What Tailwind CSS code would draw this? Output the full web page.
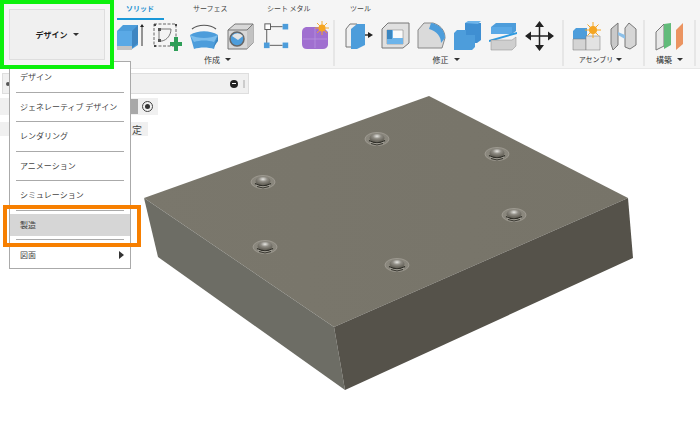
<!DOCTYPE html>
<html lang="ja">
<head>
<meta charset="UTF-8">
<title>デザイン</title>
<script src="https://cdn.jsdelivr.net/npm/@tailwindcss/browser@4"></script>
</head>
<body class="bg-white">
<div class="relative w-[700px] h-[430px] overflow-hidden bg-white text-[#333] font-['Noto_Sans_CJK_JP','Noto_Sans',sans-serif]">

  <!-- toolbar -->
  <header class="flex h-[69px] bg-[#f5f5f5] border-b border-[#e8e8e8]">
    <div class="relative z-20 w-[114px] h-[69px] shrink-0 border-[4px] border-[#0bf00b] p-[5px] bg-[#f5f5f5]">
      <div class="flex items-center justify-center gap-[5px] h-full bg-[#f0f0f0] border border-[#dedede] text-[8px] font-bold text-[#222]">デザイン<span class="w-0 h-0 border-x-[3px] border-x-transparent border-t-[3px] border-t-[#333]"></span></div>
    </div>
    <div class="flex flex-col grow">
      <nav class="relative h-[20px] text-[7px] text-[#444]">
        <span class="absolute left-[12px] top-[3px] font-bold text-[#1b8fd0]">ソリッド</span>
        <span class="absolute left-[3px] top-[18px] w-[47px] h-[2px] bg-[#1b98d8]"></span>
        <span class="absolute left-[79px] top-[3px]">サーフェス</span>
        <span class="absolute left-[153px] top-[3px]">シート メタル</span>
        <span class="absolute left-[236px] top-[3px]">ツール</span>
      </nav>
      <div class="flex grow">
        <!-- 作成 -->
        <section class="w-[221px] mb-[2px] border-r-2 border-[#e6e6e6] flex flex-col">
          <div class="flex gap-[7px] pl-[1px] h-[31px] items-center">
            <svg class="w-[30px] h-[30px]" viewBox="0 0 30 30"><path d="M2 10l6-6h15v20l-6 4H2z" fill="#4d9ddb"/><path d="M2 10h15v15H2z" fill="#5aa9e6"/><path d="M17 10l6-6v18l-6 5z" fill="#3f86c2"/><path d="M2 25h15v4H2z" fill="#c4c4c4"/><path d="M27 5v20" stroke="#333" stroke-width="1"/><path d="M25 6l2-3 2 3z" fill="#222"/></svg>
            <svg class="w-[30px] h-[30px]" viewBox="0 0 30 30"><rect x="2" y="3" width="22" height="22" fill="none" stroke="#666" stroke-width="1" stroke-dasharray="3 1.500"/><path d="M2 3h2v2H2zM23 3h2v2h-2zM2 24h2v2H2z" fill="#444"/><path d="M7 8h12c0 6-4 11-9 12H7z" fill="#f4f4f4" stroke="#777" stroke-width="1"/><rect x="6" y="7" width="3" height="3" fill="#555"/><rect x="6" y="18" width="3" height="3" fill="#555"/><path d="M18 21h4v-5h4v5h4v4h-4v5h-4v-5h-4z" fill="#2e9e57"/></svg>
            <svg class="w-[30px] h-[30px]" viewBox="0 0 30 30"><path d="M1 14c8-5 20-5 28 0l-4 14c-6-2-14-2-20 0z" fill="#4d9ddb"/><path d="M1 14c8 4 20 4 28 0l-4 7c-6-2-14-2-20 0z" fill="#7cbdec"/><path d="M24 27l5-13v6z" fill="#3b86c0"/><path d="M3 8c6-5 18-5 24 0" fill="none" stroke="#555" stroke-width="1.200"/></svg>
            <svg class="w-[30px] h-[30px]" viewBox="0 0 30 30"><path d="M2 9l7-6h18v19l-6 6H2z" fill="#d8d8d8" stroke="#777" stroke-width="1"/><path d="M21 9v19l6-6V3z" fill="#c2c2c2"/><path d="M2 9h19M21 9l6-6" stroke="#777" stroke-width="1"/><circle cx="11" cy="18" r="7" fill="#4d9ddb" stroke="#666" stroke-width="1.500"/><path d="M6 15a7 7 0 0 1 11 0l-5 4z" fill="#e4e4e4"/></svg>
            <svg class="w-[28px] h-[30px]" viewBox="0 0 30 30"><path d="M7 5h14M4 8v15M7 25h14" stroke="#555" stroke-width="1" fill="none"/><rect x="2" y="2" width="6" height="6" fill="#fff" stroke="#555"/><rect x="21" y="2" width="6" height="6" fill="#4d9ddb"/><rect x="1" y="22" width="6" height="6" fill="#4d9ddb"/><rect x="21" y="22" width="6" height="6" fill="#4d9ddb"/></svg>
            <svg class="w-[30px] h-[30px] ml-[2px]" viewBox="0 0 30 30"><path d="M2 11q0-4 4-5h17l5 5v13q-1 4-5 4H7q-5 0-5-5z" fill="#a06fd0"/><path d="M3 18h24M15 7v20" stroke="#b892e0" stroke-width=".8"/><circle cx="22" cy="7" r="3.500" fill="#f5a623"/><path d="M22 0v14M15 7h14M17 2l10 10M27 2L17 12" stroke="#f5a623" stroke-width=".9"/></svg>
          </div>
          <div class="flex items-center justify-center gap-[5px] text-[8px] h-[15px] pt-[2px] pr-[12px]">作成<span class="w-0 h-0 border-x-[3px] border-x-transparent border-t-[3px] border-t-[#333]"></span></div>
        </section>
        <!-- 修正 -->
        <section class="w-[229px] mb-[2px] border-r-2 border-[#e6e6e6] flex flex-col">
          <div class="flex gap-[7px] pl-[10px] h-[31px] items-center">
            <svg class="w-[29px] h-[30px]" viewBox="0 0 29 30"><path d="M1 8l4-5h7v23H1z" fill="#f0f0f0" stroke="#777"/><path d="M6 8l6-5h8v21l-8 4H6z" fill="#4d9ddb"/><path d="M20 14h4" stroke="#333" stroke-width="1.500"/><path d="M23 11l5 3-5 3z" fill="#222"/></svg>
            <svg class="w-[29px] h-[30px]" viewBox="0 0 29 30"><path d="M1 8l6-6h21v20l-6 5H1z" fill="#e0e0e0" stroke="#777"/><path d="M6 9h16v14H6z" fill="#fafafa" stroke="#777" stroke-width=".5"/><path d="M6 9h6v8h10v6H6z" fill="#6db4ea"/><path d="M6 9h5v9H6z" fill="#3b86c0"/></svg>
            <svg class="w-[29px] h-[30px]" viewBox="0 0 29 30"><path d="M1 9l6-7h9c7 2 12 7 12 15l-3 10H1z" fill="#dadada" stroke="#888"/><path d="M14 2c8 1 14 7 14 15l-4 5c0-6-4-12-12-14z" fill="#4d9ddb"/></svg>
            <svg class="w-[29px] h-[30px]" viewBox="0 0 29 30"><path d="M12 2h16v17l-4 3H12z" fill="#3f8fd2"/><path d="M1 12l3-3h9v5h9v12l-3 3H1z" fill="#4d9ddb"/><path d="M12 2l3-2h13l-3 3z" fill="#6db4ea"/></svg>
            <svg class="w-[29px] h-[30px]" viewBox="0 0 29 30"><path d="M2 6l5-4h20v8l-4 3H2z" fill="#4d9ddb"/><path d="M2 6h21v7H2z" fill="#5aa9e6"/><path d="M0 19l28-8v2L0 21z" fill="#2f9be0"/><path d="M2 19h21l4-3v9l-4 4H2z" fill="#cfcfcf" stroke="#888" stroke-width=".5"/></svg>
            <svg class="w-[29px] h-[30px]" viewBox="0 0 29 30"><path d="M14.500 3v24M2 15h25" stroke="#222" stroke-width="1.500"/><path d="M14.500 0l4.500 6h-9zM14.500 30l4.500-6h-9zM0 15l6-4.500v9zM29 15l-6-4.500v9z" fill="#222"/></svg>
          </div>
          <div class="flex items-center justify-center gap-[5px] text-[8px] h-[15px] pt-[2px] pr-[5px]">修正<span class="w-0 h-0 border-x-[3px] border-x-transparent border-t-[3px] border-t-[#333]"></span></div>
        </section>
        <!-- アセンブリ -->
        <section class="w-[81px] mb-[2px] border-r-2 border-[#e6e6e6] flex flex-col">
          <div class="flex gap-[8px] pl-[8px] h-[31px] items-center">
            <svg class="w-[29px] h-[30px]" viewBox="0 0 29 30"><path d="M1 10l3-3h11v11H1z" fill="#4d9ddb"/><path d="M1 18h13v11H1z" fill="#d4d4d4" stroke="#777" stroke-width=".5"/><path d="M14 15h14v14H14z" fill="#e2e2e2" stroke="#777" stroke-width=".5"/><circle cx="21" cy="9" r="4" fill="#f5a623"/><path d="M21 1v16M13 9h16M15.500 3.500l11 11M26.500 3.500l-11 11" stroke="#f5a623" stroke-width="1"/></svg>
            <svg class="w-[29px] h-[30px]" viewBox="0 0 29 30"><path d="M2 8l7-6v22l-5 5-2-6z" fill="#c9c9c9" stroke="#777"/><path d="M27 8l-7-6-4 5v19l5 2 6-4z" fill="#d6d6d6" stroke="#777"/><path d="M9 14l7 4v-4l-7-3z" fill="#8dc0e8"/></svg>
          </div>
          <div class="flex items-center justify-center gap-[3px] text-[7px] h-[15px] pt-[2px] pr-[6px]">アセンブリ<span class="w-0 h-0 border-x-[3px] border-x-transparent border-t-[3px] border-t-[#333]"></span></div>
        </section>
        <!-- 構築 -->
        <section class="w-[51px] mb-[2px] border-r-2 border-[#e6e6e6] flex flex-col">
          <div class="flex pl-[10px] h-[31px] items-center">
            <svg class="w-[29px] h-[30px]" viewBox="0 0 29 30"><path d="M1 11l8-8v22l-8 4z" fill="#e8e8e8" stroke="#777"/><path d="M9 3l7-1v22l-7 4z" fill="#62bb7a"/><path d="M21 9l7-7v21l-7 6z" fill="#eb9461"/></svg>
          </div>
          <div class="flex items-center justify-center gap-[5px] text-[8px] h-[15px] pt-[2px]">構築<span class="w-0 h-0 border-x-[3px] border-x-transparent border-t-[3px] border-t-[#333]"></span></div>
        </section>
      </div>
    </div>
  </header>

  <!-- browser panel behind the menu -->
  <div class="flex items-center justify-between w-[247px] h-[21px] ml-[2px] mt-[4px] bg-[#f0f0f0] border border-[#dedede] px-[3px]">
    <span class="w-[4px] h-[4px] rounded-full bg-[#555]"></span>
    <span class="flex items-center gap-[5px]">
      <span class="flex items-center justify-center w-[8px] h-[8px] rounded-full bg-[#222]"><span class="w-[4px] h-px bg-white"></span></span>
      <span class="w-[2px] h-[8px] bg-[#ccc]"></span>
    </span>
  </div>
  <div class="flex justify-end items-center w-[158px] h-[17px] mt-[4px] bg-[#f0f0f0] pr-[5px] gap-[4px]">
    <span class="w-[7px] h-[15px] bg-[#a8a8a8]"></span>
    <span class="flex items-center justify-center w-[11px] h-[11px] rounded-full border border-[#444]"><span class="w-[5px] h-[5px] rounded-full bg-[#333]"></span></span>
  </div>
  <div class="flex justify-end items-center w-[148px] h-[14px] mt-[7px] bg-[#f0f0f0] pr-[6px] text-[10px] text-[#444]">定</div>

  <!-- model on the canvas -->
  <svg class="absolute left-0 top-0 w-[700px] h-[430px]" viewBox="0 0 700 430">
    <defs>
      <radialGradient id="hole" cy=".3" r=".55"><stop offset="0" stop-color="#e6e6e2"/><stop offset=".5" stop-color="#8f8c84"/><stop offset="1" stop-color="#6a675e"/></radialGradient>
      <linearGradient id="topFace" x1="0" y1="0" x2="1" y2="0"><stop offset="0" stop-color="#7a776c"/><stop offset="1" stop-color="#777469"/></linearGradient>
      <g id="nut">
        <ellipse rx="12" ry="6.500" fill="#8a877d" stroke="#a3a097" stroke-width=".8"/>
        <ellipse cy="-1" rx="7.500" ry="4.500" fill="url(#hole)"/>
        <path d="M-8 1.500q8 4.500 16 0" stroke="#2f2e28" stroke-width="1.200" fill="none"/>
        <path d="M-7 3q7 4 14 0" stroke="#b5b2a9" stroke-width=".7" fill="none"/>
        <path d="M-6 4.500q6 3 12 0" stroke="#37362f" stroke-width="1" fill="none"/>
      </g>
    </defs>
    <path d="M429 96L628 198L334 327L144 198z" fill="url(#topFace)"/>
    <path d="M144 198L334 327L345 390L158 257z" fill="#6d6d65"/>
    <path d="M334 327L628 198L633 258L345 390z" fill="#55524a"/>
    <use href="#nut" x="377" y="139"/>
    <use href="#nut" x="497" y="154"/>
    <use href="#nut" x="263" y="182"/>
    <use href="#nut" x="514" y="215"/>
    <use href="#nut" x="265" y="247"/>
    <use href="#nut" x="397" y="265"/>
  </svg>

  <!-- workspace menu -->
  <ul class="absolute left-[9px] top-[61px] w-[122px] h-[208px] bg-white border border-[#aaa] text-[8px] text-[#444] px-[6px] z-10">
    <li class="h-[30.500px] flex items-center pl-[4px] pt-[1px] border-b border-[#aaa]">デザイン</li>
    <li class="h-[29.500px] flex items-center pl-[4px] border-b border-[#aaa]">ジェネレーティブ デザイン</li>
    <li class="h-[29.500px] flex items-center pl-[4px] border-b border-[#aaa]">レンダリング</li>
    <li class="h-[29.500px] flex items-center pl-[4px] border-b border-[#aaa]">アニメーション</li>
    <li class="h-[29.500px] flex items-center pl-[4px] border-b border-[#aaa]">シミュレーション</li>
    <li class="h-[29.500px] py-[3px] border-b border-[#aaa]"><div class="flex items-center h-full -mx-[6px] pl-[10px] bg-[#d6d6d6]">製造</div></li>
    <li class="h-[29.500px] flex items-center justify-between pl-[4px]">図面<span class="w-0 h-0 border-y-[4px] border-y-transparent border-l-[5px] border-l-[#333]"></span></li>
  </ul>
  <!-- orange highlight -->
  <div class="absolute left-[3px] top-[205px] w-[138px] h-[42px] border-[4px] border-[#f77f00] z-20"></div>
</div>
</body>
</html>
